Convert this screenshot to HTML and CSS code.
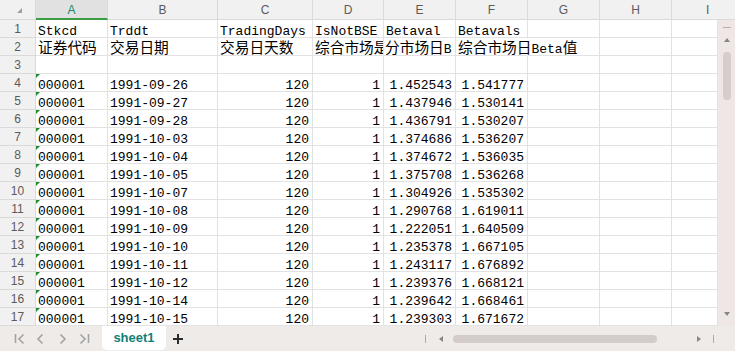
FILE: index.html
```html
<!DOCTYPE html>
<html lang="zh-CN">
  <head>
    <meta charset="UTF-8" />
    <meta name="viewport" content="width=device-width, initial-scale=1.0" />
    <title>sheet1</title>
    <link rel="stylesheet" href="styles.css">
  </head>
  <body>
    <div class="app">
      <div class="sheet">
        <!-- column headers -->
        <div class="corner"><span class="corner-mark"></span></div>
        <div class="ch sel">A</div>
        <div class="ch">B</div>
        <div class="ch">C</div>
        <div class="ch">D</div>
        <div class="ch">E</div>
        <div class="ch">F</div>
        <div class="ch">G</div>
        <div class="ch">H</div>
        <div class="ch last">I</div>

        <div class="vscroll">
          <span class="dash"></span>
          <span class="up"></span>
          <span class="thumb"></span>
          <span class="down"></span>
        </div>

        <div class="rh">1</div>
        <div class="c">Stkcd</div><div class="c">Trddt</div><div class="c">TradingDays</div><div class="c">IsNotBSE</div><div class="c">Betaval</div><div class="c">Betavals</div><div class="c"></div><div class="c"></div><div class="c"></div>

        <div class="rh">2</div>
        <div class="c"><span class="zh">证券代码</span></div><div class="c"><span class="zh">交易日期</span></div><div class="c"><span class="zh">交易日天数</span></div><div class="c"><span class="zh">综合市场是否</span></div><div class="c tight"><span class="zh">分市场日</span>B</div><div class="c spill"><span class="zh">综合市场日</span>Beta<span class="zh">值</span></div><div class="c"></div><div class="c"></div><div class="c"></div>

        <div class="rh">3</div>
        <div class="c"></div><div class="c"></div><div class="c"></div><div class="c"></div><div class="c"></div><div class="c"></div><div class="c"></div><div class="c"></div><div class="c"></div>

        <div class="rh">4</div>
        <div class="c flag">000001</div><div class="c">1991-09-26</div><div class="c num">120</div><div class="c num">1</div><div class="c num">1.452543</div><div class="c num">1.541777</div><div class="c"></div><div class="c"></div><div class="c"></div>

        <div class="rh">5</div>
        <div class="c flag">000001</div><div class="c">1991-09-27</div><div class="c num">120</div><div class="c num">1</div><div class="c num">1.437946</div><div class="c num">1.530141</div><div class="c"></div><div class="c"></div><div class="c"></div>

        <div class="rh">6</div>
        <div class="c flag">000001</div><div class="c">1991-09-28</div><div class="c num">120</div><div class="c num">1</div><div class="c num">1.436791</div><div class="c num">1.530207</div><div class="c"></div><div class="c"></div><div class="c"></div>

        <div class="rh">7</div>
        <div class="c flag">000001</div><div class="c">1991-10-03</div><div class="c num">120</div><div class="c num">1</div><div class="c num">1.374686</div><div class="c num">1.536207</div><div class="c"></div><div class="c"></div><div class="c"></div>

        <div class="rh">8</div>
        <div class="c flag">000001</div><div class="c">1991-10-04</div><div class="c num">120</div><div class="c num">1</div><div class="c num">1.374672</div><div class="c num">1.536035</div><div class="c"></div><div class="c"></div><div class="c"></div>

        <div class="rh">9</div>
        <div class="c flag">000001</div><div class="c">1991-10-05</div><div class="c num">120</div><div class="c num">1</div><div class="c num">1.375708</div><div class="c num">1.536268</div><div class="c"></div><div class="c"></div><div class="c"></div>

        <div class="rh">10</div>
        <div class="c flag">000001</div><div class="c">1991-10-07</div><div class="c num">120</div><div class="c num">1</div><div class="c num">1.304926</div><div class="c num">1.535302</div><div class="c"></div><div class="c"></div><div class="c"></div>

        <div class="rh">11</div>
        <div class="c flag">000001</div><div class="c">1991-10-08</div><div class="c num">120</div><div class="c num">1</div><div class="c num">1.290768</div><div class="c num">1.619011</div><div class="c"></div><div class="c"></div><div class="c"></div>

        <div class="rh">12</div>
        <div class="c flag">000001</div><div class="c">1991-10-09</div><div class="c num">120</div><div class="c num">1</div><div class="c num">1.222051</div><div class="c num">1.640509</div><div class="c"></div><div class="c"></div><div class="c"></div>

        <div class="rh">13</div>
        <div class="c flag">000001</div><div class="c">1991-10-10</div><div class="c num">120</div><div class="c num">1</div><div class="c num">1.235378</div><div class="c num">1.667105</div><div class="c"></div><div class="c"></div><div class="c"></div>

        <div class="rh">14</div>
        <div class="c flag">000001</div><div class="c">1991-10-11</div><div class="c num">120</div><div class="c num">1</div><div class="c num">1.243117</div><div class="c num">1.676892</div><div class="c"></div><div class="c"></div><div class="c"></div>

        <div class="rh">15</div>
        <div class="c flag">000001</div><div class="c">1991-10-12</div><div class="c num">120</div><div class="c num">1</div><div class="c num">1.239376</div><div class="c num">1.668121</div><div class="c"></div><div class="c"></div><div class="c"></div>

        <div class="rh">16</div>
        <div class="c flag">000001</div><div class="c">1991-10-14</div><div class="c num">120</div><div class="c num">1</div><div class="c num">1.239642</div><div class="c num">1.668461</div><div class="c"></div><div class="c"></div><div class="c"></div>

        <div class="rh">17</div>
        <div class="c flag">000001</div><div class="c">1991-10-15</div><div class="c num">120</div><div class="c num">1</div><div class="c num">1.239303</div><div class="c num">1.671672</div><div class="c"></div><div class="c"></div><div class="c"></div>
      </div>

      <div class="bottom">
        <div class="nav">
          <svg width="22" height="25" viewBox="0 0 22 25"><path d="M6.5 8v9M14.5 8.5l-4.5 4.5 4.5 4.5" /></svg>
          <svg width="22" height="25" viewBox="0 0 22 25"><path d="M11.5 8.5l-4.5 4.5 4.5 4.5" /></svg>
          <svg width="22" height="25" viewBox="0 0 22 25"><path d="M7.5 8.5l4.5 4.5-4.5 4.5" /></svg>
          <svg width="22" height="25" viewBox="0 0 22 25"><path d="M5.5 8.5l4.5 4.5-4.5 4.5M13.5 8v9" /></svg>
        </div>
        <div class="tab">sheet1</div>
        <svg class="plus" width="12" height="25" viewBox="0 0 12 25"><path d="M1 13h10M6 8v10" /></svg>
        <div class="hscroll">
          <span class="bar"></span>
          <span class="left"></span>
          <span class="hthumb"></span>
          <span class="right"></span>
          <span class="bar end"></span>
        </div>
      </div>
    </div>
  </body>
</html>
```

FILE: styles.css
```css
* {
  box-sizing: border-box;
}

body {
  margin: 0;
  width: 735px;
  height: 351px;
  overflow: hidden;
  background: #fff;
  font-family: "Liberation Sans", Arial, sans-serif;
}

.app {
  display: flex;
  flex-direction: column;
  height: 351px;
}

.sheet {
  display: grid;
  grid-template-columns: 36px 72px 110px 95px 71px 72px 72px 72px 72px 46px 17px;
  grid-template-rows: 20px repeat(17, 18px);
}

/* headers */
.corner,
.ch,
.rh {
  background: #f1f1f1;
  color: #5b5b5b;
  font-size: 12px;
  text-align: center;
  border-right: 1px solid #dadada;
  border-bottom: 1px solid #dadada;
}

.corner {
  display: flex;
  align-items: flex-end;
  justify-content: flex-end;
  padding: 0 13px 6px 0;
}

.corner-mark {
  width: 0;
  height: 0;
  border-left: 5px solid transparent;
  border-bottom: 5px solid #9e9e9e;
}

.ch {
  line-height: 19px;
  padding-top: 1px;
}

.ch.sel {
  background: #e1e1e1;
  color: #178a70;
  border-bottom: 2px solid #3c9c44;
}

.ch.last {
  grid-column: span 2;
  text-align: left;
  padding-left: 34px;
  border-right: none;
}

.rh {
  line-height: 18px;
  padding-top: 0;
}

/* cells */
.c {
  position: relative;
  font: 13px/18px "Liberation Mono", "Noto Sans CJK SC", monospace;
  color: #000;
  white-space: nowrap;
  overflow-x: clip;
  padding: 3px 3px 0 2px;
  border-right: 1px solid #e2e2e2;
  border-bottom: 1px solid #e2e2e2;
}

.num {
  text-align: right;
}

.tight {
  padding-left: 1px;
}

.spill {
  overflow: visible;
  border-right-color: transparent;
}

.zh {
  font-family: "Noto Sans CJK SC", sans-serif;
  font-size: 14.7px;
  line-height: 11px;
}

.flag::before {
  content: "";
  position: absolute;
  left: 0;
  top: 0;
  border-top: 4px solid #1c8d2a;
  border-right: 4px solid transparent;
}

/* vertical scrollbar */
.vscroll {
  grid-column: 11;
  grid-row: 2 / -1;
  background: #eee7e5;
  display: flex;
  flex-direction: column;
  align-items: center;
  padding-top: 7px;
}

.dash {
  width: 8px;
  height: 1px;
  background: #b5afad;
}

.up {
  margin-top: 10px;
  border-left: 3px solid transparent;
  border-right: 3px solid transparent;
  border-bottom: 4px solid #8a8583;
}

.thumb {
  margin-top: 10px;
  width: 8px;
  height: 48px;
  border-radius: 4px;
  background: #d5cecc;
}

.down {
  margin-top: auto;
  margin-bottom: 10px;
  border-left: 3px solid transparent;
  border-right: 3px solid transparent;
  border-top: 4px solid #8a8583;
}

/* bottom bar */
.bottom {
  flex: 1;
  display: flex;
  align-items: flex-start;
  background: #efebe9;
}

.nav {
  display: flex;
  padding-left: 9px;
}

.nav path {
  stroke: #a3a3a3;
  stroke-width: 1.6;
  fill: none;
}

.tab {
  margin-left: 5px;
  width: 64px;
  height: 24px;
  background: #fff;
  border-radius: 0 0 5px 5px;
  color: #127f78;
  font-weight: bold;
  font-size: 13px;
  line-height: 23px;
  text-align: center;
}

.plus {
  margin-left: 6px;
}

.plus path {
  stroke: #2b2b2b;
  stroke-width: 2;
  fill: none;
}

.hscroll {
  margin-left: auto;
  width: 310px;
  height: 25px;
  display: flex;
  align-items: center;
}

.bar {
  width: 1px;
  height: 8px;
  background: #aaa;
}

.left {
  margin-left: 13px;
  border-top: 3px solid transparent;
  border-bottom: 3px solid transparent;
  border-right: 4px solid #8a8583;
}

.hthumb {
  margin-left: 10px;
  width: 204px;
  height: 8px;
  border-radius: 4px;
  background: #d3cccb;
}

.right {
  margin-left: 40px;
  border-top: 3px solid transparent;
  border-bottom: 3px solid transparent;
  border-left: 4px solid #8a8583;
}

.bar.end {
  margin-left: 12px;
}
```
